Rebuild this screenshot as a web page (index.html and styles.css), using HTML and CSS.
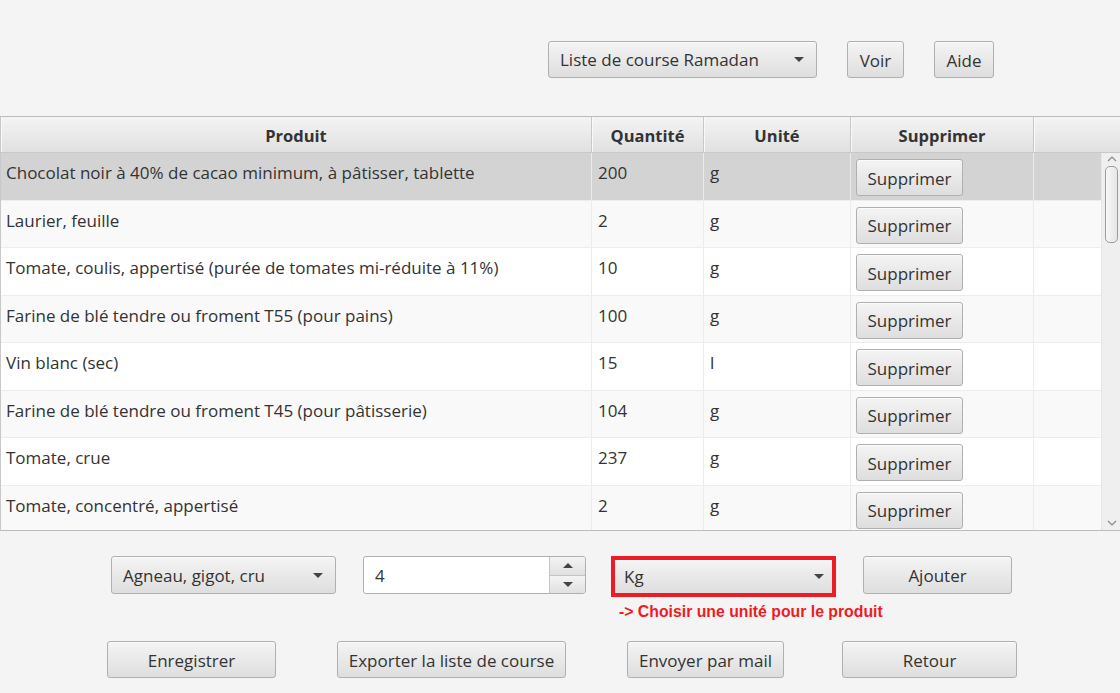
FILE: index.html
```html
<!DOCTYPE html>
<html lang="fr">
<head>
<meta charset="utf-8">
<title>Liste de course</title>
<link rel="stylesheet" href="styles.css">
</head>
<body>
<div class="app">
  <div class="toolbar">
    <div class="combo combo-list"><span>Liste de course Ramadan</span><i class="arrow"></i></div>
    <button class="btn btn-voir">Voir</button>
    <button class="btn btn-aide">Aide</button>
  </div>

  <div class="table">
    <div class="thead">
      <div class="th">Produit</div>
      <div class="th">Quantité</div>
      <div class="th">Unité</div>
      <div class="th">Supprimer</div>
      <div class="th th-fill"></div>
    </div>
    <div class="tbody">
      <div class="rows">
        <div class="tr selected"><div class="td">Chocolat noir à 40% de cacao minimum, à pâtisser, tablette</div><div class="td">200</div><div class="td">g</div><div class="td td-btn"><button class="btn btn-sup">Supprimer</button></div><div class="td td-fill"></div></div>
        <div class="tr odd"><div class="td">Laurier, feuille</div><div class="td">2</div><div class="td">g</div><div class="td td-btn"><button class="btn btn-sup">Supprimer</button></div><div class="td td-fill"></div></div>
        <div class="tr"><div class="td">Tomate, coulis, appertisé (purée de tomates mi-réduite à 11%)</div><div class="td">10</div><div class="td">g</div><div class="td td-btn"><button class="btn btn-sup">Supprimer</button></div><div class="td td-fill"></div></div>
        <div class="tr odd"><div class="td">Farine de blé tendre ou froment T55 (pour pains)</div><div class="td">100</div><div class="td">g</div><div class="td td-btn"><button class="btn btn-sup">Supprimer</button></div><div class="td td-fill"></div></div>
        <div class="tr"><div class="td">Vin blanc (sec)</div><div class="td">15</div><div class="td">l</div><div class="td td-btn"><button class="btn btn-sup">Supprimer</button></div><div class="td td-fill"></div></div>
        <div class="tr odd"><div class="td">Farine de blé tendre ou froment T45 (pour pâtisserie)</div><div class="td">104</div><div class="td">g</div><div class="td td-btn"><button class="btn btn-sup">Supprimer</button></div><div class="td td-fill"></div></div>
        <div class="tr"><div class="td">Tomate, crue</div><div class="td">237</div><div class="td">g</div><div class="td td-btn"><button class="btn btn-sup">Supprimer</button></div><div class="td td-fill"></div></div>
        <div class="tr odd last"><div class="td">Tomate, concentré, appertisé</div><div class="td">2</div><div class="td">g</div><div class="td td-btn"><button class="btn btn-sup">Supprimer</button></div><div class="td td-fill"></div></div>
      </div>
      <div class="vscroll">
        <svg class="sc-arrow" width="10" height="6" viewBox="0 0 10 6"><path d="M1 5 L5 1 L9 5" fill="none" stroke="#8a8a8a" stroke-width="1.2"/></svg>
        <div class="sc-track"><div class="sc-thumb"></div></div>
        <svg class="sc-arrow" width="10" height="6" viewBox="0 0 10 6"><path d="M1 1 L5 5 L9 1" fill="none" stroke="#8a8a8a" stroke-width="1.2"/></svg>
      </div>
    </div>
  </div>

  <div class="addrow">
    <div class="combo combo-prod"><span>Agneau, gigot, cru</span><i class="arrow"></i></div>
    <div class="spinner">
      <div class="sp-field">4</div>
      <div class="sp-btns">
        <div class="sp-btn"><i class="arrow up"></i></div>
        <div class="sp-btn"><i class="arrow"></i></div>
      </div>
    </div>
    <div class="unit-col">
      <div class="combo combo-unit"><span>Kg</span><i class="arrow"></i></div>
      <div class="error">-&gt; Choisir une unité pour le produit</div>
    </div>
    <button class="btn btn-ajouter">Ajouter</button>
  </div>

  <div class="actions">
    <button class="btn btn-enr">Enregistrer</button>
    <button class="btn btn-exp">Exporter la liste de course</button>
    <button class="btn btn-env">Envoyer par mail</button>
    <button class="btn btn-ret">Retour</button>
  </div>
</div>
</body>
</html>
```

FILE: styles.css
```css
* { box-sizing: border-box; }
html, body { margin: 0; padding: 0; }
body {
  background: #f4f4f4;
  font-family: "Open Sans", "Noto Sans", "DejaVu Sans", sans-serif;
  font-size: 17px;
  color: #333;
  width: 1120px;
  height: 693px;
  overflow: hidden;
}
.app { display: flex; flex-direction: column; }

/* generic button */
.btn {
  font-family: inherit;
  font-size: 17px;
  color: #333;
  border: 1px solid #b0b0b0;
  border-radius: 3px;
  background: linear-gradient(#f4f4f4, #dedede);
  box-shadow: inset 0 1px 0 #fbfbfb;
  padding: 1px 0 0 0;
  margin: 0;
  height: 37px;
  cursor: default;
  white-space: nowrap;
}

/* combo */
.combo {
  display: flex;
  align-items: center;
  justify-content: space-between;
  height: 37px;
  border: 1px solid #b0b0b0;
  border-radius: 3px;
  background: linear-gradient(#f4f4f4, #dedede);
  box-shadow: inset 0 1px 0 #fbfbfb;
  padding: 0 12px 0 11px;
  white-space: nowrap;
}
.arrow {
  display: block;
  width: 0; height: 0;
  border-left: 5px solid transparent;
  border-right: 5px solid transparent;
  border-top: 5px solid #444;
}
.arrow.up { border-top: 0; border-bottom: 5px solid #444; }

/* toolbar */
.toolbar {
  height: 116px;
  display: flex;
  justify-content: flex-end;
  align-items: flex-start;
  padding: 41px 126px 0 0;
  gap: 30px;
}
.combo-list { width: 269px; }
.btn-voir { width: 57px; }
.btn-aide { width: 60px; }

/* table */
.table {
  height: 415px;
  border-top: 1px solid #bcbcbc;
  border-bottom: 1px solid #bcbcbc;
  border-left: 1px solid #c8c8c8;
  background: #fff;
  display: flex;
  flex-direction: column;
}
.thead {
  display: grid;
  grid-template-columns: 591px 112px 147px 183px 1fr;
  height: 36px;
  background: linear-gradient(#f3f3f3, #e1e1e1);
  border-bottom: 1px solid #c8c8c8;
}
.th {
  display: flex;
  align-items: center;
  justify-content: center;
  font-weight: bold;
  font-size: 16.5px;
  color: #333;
  border-right: 1px solid #c8c8c8;
  box-shadow: inset 1px 0 0 #f9f9f9;
  padding-top: 1px;
}
.th-fill { border-right: 0; }
.tbody { flex: 1; display: flex; min-height: 0; }
.rows { flex: 1; display: flex; flex-direction: column; overflow: hidden; }
.tr {
  display: grid;
  grid-template-columns: 591px 112px 147px 183px 1fr;
  height: 47.5px;
  flex: none;
  background: #fff;
  border-bottom: 1px solid #ededed;
}
.tr.odd { background: #f9f9f9; }
.tr.selected { background: #d3d3d3; }
.tr.last { border-bottom: 0; }
.td {
  padding: 9px 0 0 5px;
  border-right: 1px solid #ececec;
  white-space: nowrap;
  overflow: hidden;
  line-height: 22px;
}
.td:nth-child(2), .td:nth-child(3) { padding-left: 6px; }
.td-btn { padding: 6px 0 0 5px; }
.td-fill { border-right: 0; }
.btn-sup { width: 107px; height: 37px; }

/* scrollbar */
.vscroll {
  width: 19px;
  background: #efefef;
  display: flex;
  flex-direction: column;
  align-items: center;
  border-left: 1px solid #e6e6e6;
}
.sc-arrow { margin: 3px 0 0 1px; flex: none; }
.vscroll .sc-arrow:last-child { margin: 0 0 4px 1px; }
.sc-track { flex: 1; width: 100%; padding: 4px 2px 0 3px; }
.sc-thumb {
  height: 77px;
  border: 1px solid #9c9c9c;
  border-radius: 5px;
  background: linear-gradient(90deg, #f7f7f7, #e6e6e6);
}

/* add row */
.addrow {
  display: flex;
  align-items: flex-start;
  padding: 25px 0 0 111px;
  height: 110px;
}
.combo-prod { width: 225px; height: 38px; }
.spinner {
  margin-left: 27px;
  width: 223px;
  height: 38px;
  display: flex;
  border: 1px solid #b0b0b0;
  border-radius: 3px;
  background: #fff;
  overflow: hidden;
}
.sp-field { flex: 1; display: flex; align-items: center; padding-left: 11px; }
.sp-btns { width: 36px; display: flex; flex-direction: column; border-left: 1px solid #c4c4c4; }
.sp-btn {
  flex: 1;
  display: flex;
  align-items: center;
  justify-content: center;
  background: linear-gradient(#f4f4f4, #e0e0e0);
}
.sp-btn + .sp-btn { border-top: 1px solid #c4c4c4; }
.unit-col { margin-left: 25px; width: 225px; flex: none; display: flex; flex-direction: column; }
.combo-unit {
  width: 225px;
  height: 41px;
  border: 4px solid #ed1c24;
  border-radius: 0;
  padding: 0 8px 0 9px;
}
.error {
  margin: 6px 0 0 8px;
  font-family: "Liberation Sans", Arial, sans-serif;
  font-weight: bold;
  font-size: 15.8px;
  color: #ed1c24;
  white-space: nowrap;
}
.btn-ajouter { margin-left: 27px; width: 149px; height: 38px; }

/* bottom actions */
.actions {
  display: flex;
  align-items: flex-start;
  padding: 0 0 0 107px;
}
.btn-enr { width: 169px; }
.btn-exp { width: 229px; margin-left: 61px; }
.btn-env { width: 157px; margin-left: 61px; }
.btn-ret { width: 175px; margin-left: 58px; }
```
